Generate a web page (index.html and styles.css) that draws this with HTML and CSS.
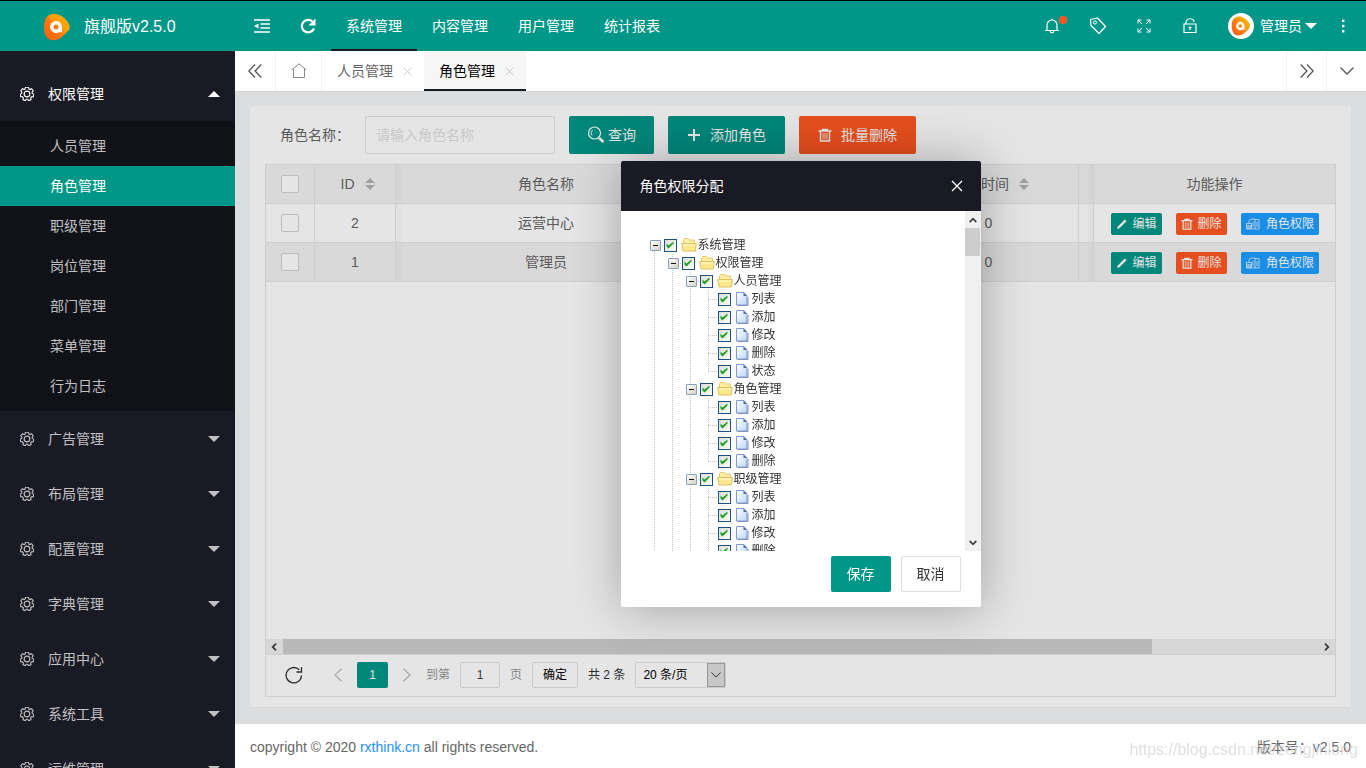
FILE: index.html
```html
<!DOCTYPE html>
<html lang="zh-CN">
<head>
<meta charset="utf-8">
<title>角色管理</title>
<link rel="stylesheet" href="styles.css">
</head>
<body>
<svg class="defs" aria-hidden="true">
  <defs>
    <linearGradient id="g-logo" x1="0" y1="1" x2="1" y2="0"><stop offset="0" stop-color="#ff5a10"/><stop offset=".5" stop-color="#ff7d0c"/><stop offset=".55" stop-color="#ff9a08"/><stop offset="1" stop-color="#ffb400"/></linearGradient>
    <linearGradient id="g-file" x1="0" y1="0" x2="1" y2="1"><stop offset="0" stop-color="#fff"/><stop offset="1" stop-color="#b9d6fb"/></linearGradient>
  </defs>
  <symbol id="i-logo" viewBox="0 0 26 28"><path d="M9 .8C14 0 20 4 23 8c4 5 3 8 0 11-4 4-7 8-14 8.200C3 27 0 22 0 14 0 6 3 1.500 9 .8z" fill="url(#g-logo)"/><path d="M12 8a6 6 0 1 0 3.500 10.900L18 19.500V14a6 6 0 0 0-6-6z" fill="#fff"/><circle cx="12" cy="14" r="2.500" fill="#ff7d0c"/></symbol>
  <symbol id="i-gear" viewBox="1.3 1.300 13.400 13.800"><g fill="none" stroke="currentColor" stroke-width="1.100"><path d="M6.500 1.600h3l.4 1.700 1 .5 1.600-.8 1.600 2-1.100 1.400.2 1.200 1.600.8-.6 2.500-1.800.1-.8 1 .4 1.700-2.300 1.100L8.600 13.400H7.400l-1.100 1.400L4 13.700l.4-1.700-.8-1-1.800-.1-.6-2.500 1.600-.8.200-1.200-1.100-1.400 1.600-2 1.600.8 1-.5z"/><circle cx="8" cy="8.200" r="2.800"/></g></symbol>
  <symbol id="i-fold" viewBox="0 0 16 16"><path d="M0 2h16M6.500 6h9.500M6.500 10h9.500M0 14h16" stroke="currentColor" stroke-width="1.700" fill="none"/><path d="M0 8 4.500 5.500v5z" fill="currentColor"/></symbol>
  <symbol id="i-reload" viewBox="0 0 16 16"><path d="M14 10.500A6.300 6.300 0 1 1 12.500 3.500" fill="none" stroke="currentColor" stroke-width="2.200"/><path d="M15.500.5v7H8.500z" fill="currentColor"/></symbol>
  <symbol id="i-bell" viewBox="0 0 16 16"><path d="M1 12.500h14M3 12.500V7a5 5 0 0 1 10 0v5.500M8 2V.8M6.300 13a1.700 1.900 0 0 0 3.400 0" fill="none" stroke="currentColor" stroke-width="1.200"/></symbol>
  <symbol id="i-tag" viewBox="0 0 18 18"><path d="M1.500 2.500 8.500 1l8 8.500-6.500 7-8-8z" fill="none" stroke="currentColor" stroke-width="1.200" stroke-linejoin="round"/><circle cx="6" cy="5.500" r="1.600" fill="none" stroke="currentColor"/></symbol>
  <symbol id="i-full" viewBox="0 0 14 14"><path d="M1 4.500V1h3.500M1 1l4 4M9.500 1H13v3.500M13 1 9 5M1 9.500V13h3.500M1 13l4-4M13 9.500V13H9.500M13 13 9 9" fill="none" stroke="currentColor"/></symbol>
  <symbol id="i-lock" viewBox="0 0 14 16"><path d="M1 6h12v8.500H1zM3 6V4.500a4 3.500 0 0 1 8-.5M7 8.500v3.500M5.500 9.500h3" fill="none" stroke="currentColor" stroke-width="1.200"/></symbol>
  <symbol id="i-dots" viewBox="0 0 4 14"><path d="M1 .5h2.400v2.400H1zM1 5.800h2.400v2.400H1zM1 11h2.400v2.400H1z" fill="currentColor"/></symbol>
  <symbol id="i-dleft" viewBox="0 0 14 14"><path d="M7 .5.8 7 7 13.500M13.300.5 7.100 7l6.200 6.500" fill="none" stroke="currentColor" stroke-width="1.300"/></symbol>
  <symbol id="i-dright" viewBox="0 0 14 14"><path d="M7 .5 13.200 7 7 13.500M.7.5 6.900 7 .7 13.500" fill="none" stroke="currentColor" stroke-width="1.300"/></symbol>
  <symbol id="i-down" viewBox="0 0 14 8"><path d="M.5.5 7 7 13.500.5" fill="none" stroke="currentColor" stroke-width="1.300"/></symbol>
  <symbol id="i-bold-down" viewBox="0 0 8 6"><path d="M.7 1 4 4.300 7.300 1" fill="none" stroke="currentColor" stroke-width="1.800"/></symbol>
  <symbol id="i-bold-left" viewBox="0 0 6 8"><path d="M5 .7 1.700 4 5 7.300" fill="none" stroke="currentColor" stroke-width="1.800"/></symbol>
  <symbol id="i-bold-right" viewBox="0 0 6 8"><path d="M1 .7 4.300 4 1 7.300" fill="none" stroke="currentColor" stroke-width="1.800"/></symbol>
  <symbol id="i-left" viewBox="0 0 8 14"><path d="M7.500.8 1 7l6.500 6.200" fill="none" stroke="currentColor" stroke-width="1.200"/></symbol>
  <symbol id="i-right" viewBox="0 0 8 14"><path d="M.5.8 7 7 .5 13.200" fill="none" stroke="currentColor" stroke-width="1.200"/></symbol>
  <symbol id="i-home" viewBox="0 0 16 16"><path d="M.5 7 8 .8 15.500 7M2.500 6v8.500h11V6" fill="none" stroke="currentColor"/></symbol>
  <symbol id="i-close" viewBox="0 0 12 12"><path d="m1 1 10 10M11 1 1 11" fill="none" stroke="currentColor" stroke-width="1.300"/></symbol>
  <symbol id="i-search" viewBox="0 0 18 18"><circle cx="7.500" cy="7" r="6" fill="none" stroke="currentColor" stroke-width="1.200"/><path d="M5.500 4A4 4 0 0 0 5 9.500" fill="none" stroke="currentColor"/><path d="m12 12 4.500 4" stroke="currentColor" stroke-width="2.600"/></symbol>
  <symbol id="i-plus" viewBox="0 0 14 14"><path d="M7 1v12M1 7h12" stroke="currentColor" stroke-width="2"/></symbol>
  <symbol id="i-trash" viewBox="0 0 14 14"><path d="M.5 3h13M4.500 3V1.500h5V3M2.500 3v10h9V3" fill="none" stroke="currentColor" stroke-width="1.400"/><path d="M5 5v6.500M7 5v6.500M9 5v6.500" stroke="currentColor" opacity=".8"/></symbol>
  <symbol id="i-pen" viewBox="0 0 12 12"><path d="m1 11 .8-2.600L8.800 1.500l1.700 1.700-7 7z" fill="currentColor"/></symbol>
  <symbol id="i-perm" viewBox="0 0 14 12"><path d="M.5 11V5.500h5V11zM3 5V2.500L5 1h4v10M9 1.500h4V11H6M7 4v5M11 4v5" fill="none" stroke="currentColor" opacity=".7"/><path d="M1 7h4v4H1z" fill="currentColor" opacity=".5"/></symbol>
  <symbol id="i-refresh" viewBox="0 0 18 18"><path d="M16.500 9.500a7.700 7.700 0 1 1-2.200-5.700M16.500 1v5h-5" fill="none" stroke="currentColor" stroke-width="1.300"/></symbol>
  <symbol id="i-folder" viewBox="0 0 16 14"><path d="M2.500 10V2l1-1.500h4l1 1.500h5v9z" fill="#fbeea0" stroke="#e6cb74"/><path d="M.7 5.500h14.600l-1 7.500H2z" fill="#fbe88a" stroke="#dfc063"/><path d="M2 7h12" stroke="#fffbd6"/></symbol>
  <symbol id="i-file" viewBox="0 0 16 14"><path d="M2.500 13.500h10.500V5" fill="none" stroke="#8d8ba6"/><path d="M1.500.5H9L12 4v9H1.500z" fill="url(#g-file)" stroke="#7f9ad6"/><path d="M8.500.5V4H12z" fill="#4a6cbb"/></symbol>
</svg>

<div class="app">
  <aside class="side">
    <a class="brand" href="#"><svg width="26" height="28"><use href="#i-logo"/></svg><span>旗舰版v2.5.0</span></a>
    <nav class="menu">
      <a class="menu-item open" href="#"><svg width="14" height="14"><use href="#i-gear"/></svg>权限管理<i class="caret up"></i></a>
      <div class="submenu">
        <a href="#">人员管理</a>
        <a class="current" href="#">角色管理</a>
        <a href="#">职级管理</a>
        <a href="#">岗位管理</a>
        <a href="#">部门管理</a>
        <a href="#">菜单管理</a>
        <a href="#">行为日志</a>
      </div>
      <a class="menu-item" href="#"><svg width="14" height="14"><use href="#i-gear"/></svg>广告管理<i class="caret"></i></a>
      <a class="menu-item" href="#"><svg width="14" height="14"><use href="#i-gear"/></svg>布局管理<i class="caret"></i></a>
      <a class="menu-item" href="#"><svg width="14" height="14"><use href="#i-gear"/></svg>配置管理<i class="caret"></i></a>
      <a class="menu-item" href="#"><svg width="14" height="14"><use href="#i-gear"/></svg>字典管理<i class="caret"></i></a>
      <a class="menu-item" href="#"><svg width="14" height="14"><use href="#i-gear"/></svg>应用中心<i class="caret"></i></a>
      <a class="menu-item" href="#"><svg width="14" height="14"><use href="#i-gear"/></svg>系统工具<i class="caret"></i></a>
      <a class="menu-item" href="#"><svg width="14" height="14"><use href="#i-gear"/></svg>运维管理<i class="caret"></i></a>
    </nav>
  </aside>

  <div class="page">
    <header class="top">
      <button class="top-btn" aria-label="收起菜单"><svg width="16" height="16"><use href="#i-fold"/></svg></button>
      <button class="top-btn" aria-label="刷新"><svg width="16" height="16"><use href="#i-reload"/></svg></button>
      <nav class="top-nav">
        <a class="on" href="#">系统管理</a>
        <a href="#">内容管理</a>
        <a href="#">用户管理</a>
        <a href="#">统计报表</a>
      </nav>
      <button class="top-btn bell" aria-label="消息"><svg width="16" height="16"><use href="#i-bell"/></svg><i class="dot"></i></button>
      <button class="top-btn" aria-label="便签"><svg width="18" height="18"><use href="#i-tag"/></svg></button>
      <button class="top-btn" aria-label="全屏"><svg width="14" height="14"><use href="#i-full"/></svg></button>
      <button class="top-btn" aria-label="锁屏"><svg width="14" height="16"><use href="#i-lock"/></svg></button>
      <a class="user" href="#"><span class="avatar"><svg width="20" height="20"><use href="#i-logo"/></svg></span>管理员<i class="caret"></i></a>
      <button class="top-btn" aria-label="更多"><svg width="4" height="14"><use href="#i-dots"/></svg></button>
    </header>

    <div class="tabs">
      <button class="tab-ctl first" aria-label="向左"><svg width="14" height="14"><use href="#i-dleft"/></svg></button>
      <button class="tab-ctl home" aria-label="首页"><svg width="16" height="16"><use href="#i-home"/></svg></button>
      <a class="tab" href="#">人员管理<svg width="9" height="9"><use href="#i-close"/></svg></a>
      <a class="tab on" href="#">角色管理<svg width="9" height="9"><use href="#i-close"/></svg></a>
      <button class="tab-ctl end" aria-label="向右"><svg width="14" height="14"><use href="#i-dright"/></svg></button>
      <button class="tab-ctl last" aria-label="更多标签"><svg width="14" height="8"><use href="#i-down"/></svg></button>
    </div>

    <main class="content">
      <section class="card">
        <form class="filters">
          <label for="role">角色名称：</label>
          <input id="role" type="text" placeholder="请输入角色名称">
          <button class="btn" type="button"><svg width="18" height="18"><use href="#i-search"/></svg>查询</button>
          <button class="btn wide" type="button"><svg width="14" height="14"><use href="#i-plus"/></svg>添加角色</button>
          <button class="btn wide danger" type="button"><svg width="14" height="14"><use href="#i-trash"/></svg>批量删除</button>
        </form>

        <div class="grid">
          <div class="grid-body">
            <table>
              <colgroup><col class="c-check"><col class="c-id"><col class="c-name"><col><col class="c-time"><col class="c-gap"><col class="c-ops"></colgroup>
              <thead>
                <tr><th><input type="checkbox" aria-label="全选"></th><th>ID<i class="sort"></i></th><th class="after-fixed">角色名称</th><th></th><th>添加时间<i class="sort"></i></th><th class="gap"></th><th>功能操作</th></tr>
              </thead>
              <tbody>
                <tr>
                  <td><input type="checkbox" aria-label="选择运营中心"></td><td>2</td><td class="after-fixed">运营中心</td><td></td><td>0</td><td class="gap"></td>
                  <td><div class="ops"><button class="mini"><svg width="12" height="12"><use href="#i-pen"/></svg>编辑</button><button class="mini danger"><svg width="12" height="12"><use href="#i-trash"/></svg>删除</button><button class="mini info"><svg width="14" height="12"><use href="#i-perm"/></svg>角色权限</button></div></td>
                </tr>
                <tr class="hover">
                  <td><input type="checkbox" aria-label="选择管理员"></td><td>1</td><td class="after-fixed">管理员</td><td></td><td>0</td><td class="gap"></td>
                  <td><div class="ops"><button class="mini"><svg width="12" height="12"><use href="#i-pen"/></svg>编辑</button><button class="mini danger"><svg width="12" height="12"><use href="#i-trash"/></svg>删除</button><button class="mini info"><svg width="14" height="12"><use href="#i-perm"/></svg>角色权限</button></div></td>
                </tr>
              </tbody>
            </table>
          </div>
          <div class="hbar"><svg width="6" height="8"><use href="#i-bold-left"/></svg><div class="htrack"><div class="hthumb"></div></div><svg width="6" height="8"><use href="#i-bold-right"/></svg></div>
          <div class="pager">
            <button class="plain refresh" aria-label="刷新表格"><svg width="18" height="18"><use href="#i-refresh"/></svg></button>
            <button class="plain arrow" aria-label="上一页"><svg width="8" height="14"><use href="#i-left"/></svg></button>
            <button class="num">1</button>
            <button class="plain arrow" aria-label="下一页"><svg width="8" height="14"><use href="#i-right"/></svg></button>
            <label for="goto">到第</label>
            <input id="goto" type="text" value="1">
            <span class="muted">页</span>
            <button class="ok">确定</button>
            <span class="total">共 2 条</span>
            <span class="size"><select aria-label="每页条数"><option>20 条/页</option></select><i><svg width="10" height="6"><use href="#i-down"/></svg></i></span>
          </div>
        </div>
      </section>
      <div class="shade"></div>
    </main>

    <footer class="foot">
      <p>copyright © 2020 <a href="#">rxthink.cn</a> all rights reserved.</p>
      <p>版本号：v2.5.0</p>
    </footer>
  </div>
</div>

<div class="layer">
  <div class="modal" role="dialog" aria-labelledby="modal-title">
    <div class="modal-head"><h2 id="modal-title">角色权限分配</h2><button class="plain" aria-label="关闭"><svg width="12" height="12"><use href="#i-close"/></svg></button></div>
    <div class="modal-body">
      <ul class="tree">
        <li><label><i class="sw minus"></i><input type="checkbox" checked><svg width="16" height="14"><use href="#i-folder"/></svg>系统管理</label>
          <ul>
            <li><label><i class="sw minus"></i><input type="checkbox" checked><svg width="16" height="14"><use href="#i-folder"/></svg>权限管理</label>
              <ul>
                <li><label><i class="sw minus"></i><input type="checkbox" checked><svg width="16" height="14"><use href="#i-folder"/></svg>人员管理</label>
                  <ul>
                    <li><label><i class="sw"></i><input type="checkbox" checked><svg width="16" height="14"><use href="#i-file"/></svg>列表</label></li>
                    <li><label><i class="sw"></i><input type="checkbox" checked><svg width="16" height="14"><use href="#i-file"/></svg>添加</label></li>
                    <li><label><i class="sw"></i><input type="checkbox" checked><svg width="16" height="14"><use href="#i-file"/></svg>修改</label></li>
                    <li><label><i class="sw"></i><input type="checkbox" checked><svg width="16" height="14"><use href="#i-file"/></svg>删除</label></li>
                    <li class="end"><label><i class="sw"></i><input type="checkbox" checked><svg width="16" height="14"><use href="#i-file"/></svg>状态</label></li>
                  </ul>
                </li>
                <li><label><i class="sw minus"></i><input type="checkbox" checked><svg width="16" height="14"><use href="#i-folder"/></svg>角色管理</label>
                  <ul>
                    <li><label><i class="sw"></i><input type="checkbox" checked><svg width="16" height="14"><use href="#i-file"/></svg>列表</label></li>
                    <li><label><i class="sw"></i><input type="checkbox" checked><svg width="16" height="14"><use href="#i-file"/></svg>添加</label></li>
                    <li><label><i class="sw"></i><input type="checkbox" checked><svg width="16" height="14"><use href="#i-file"/></svg>修改</label></li>
                    <li class="end"><label><i class="sw"></i><input type="checkbox" checked><svg width="16" height="14"><use href="#i-file"/></svg>删除</label></li>
                  </ul>
                </li>
                <li><label><i class="sw minus"></i><input type="checkbox" checked><svg width="16" height="14"><use href="#i-folder"/></svg>职级管理</label>
                  <ul>
                    <li><label><i class="sw"></i><input type="checkbox" checked><svg width="16" height="14"><use href="#i-file"/></svg>列表</label></li>
                    <li><label><i class="sw"></i><input type="checkbox" checked><svg width="16" height="14"><use href="#i-file"/></svg>添加</label></li>
                    <li><label><i class="sw"></i><input type="checkbox" checked><svg width="16" height="14"><use href="#i-file"/></svg>修改</label></li>
                    <li><label><i class="sw"></i><input type="checkbox" checked><svg width="16" height="14"><use href="#i-file"/></svg>删除</label></li>
                  </ul>
                </li>
              </ul>
            </li>
          </ul>
        </li>
      </ul>
      <div class="vbar"><svg width="8" height="6" class="flip"><use href="#i-bold-down"/></svg><div class="vthumb"></div><svg width="8" height="6"><use href="#i-bold-down"/></svg></div>
    </div>
    <div class="modal-foot"><button class="save">保存</button><button class="cancel">取消</button></div>
  </div>
</div>
<div class="watermark">https://blog.csdn.net/zengjinlong</div>
</body>
</html>
```
FILE: styles.css
```css
* { box-sizing: border-box; }
body, p, h2, ul { margin: 0; padding: 0; }
body {
  font: 14px/20px "Liberation Sans", "Noto Sans CJK SC", sans-serif;
  color: #666;
  overflow: hidden;
}
a { color: inherit; text-decoration: none; }
button, input, select { font: inherit; }
button { border: 0; padding: 0; background: none; color: inherit; display: flex; align-items: center; justify-content: center; }
svg { display: block; flex: none; }
.defs { position: absolute; width: 0; height: 0; }
.caret { border: 6px solid transparent; border-top-color: currentColor; border-bottom-width: 0; }
.caret.up { border-width: 0 6px 6px; border-bottom-color: currentColor; }

.app { display: flex; height: 100vh; border-top: 1px solid #000; background: #fff; }

/* Sidebar */
.side { width: 235px; flex: none; background: #1a1a24; color: #c0c0c2; overflow: hidden; }
.brand { display: flex; align-items: center; gap: 14px; height: 50px; padding: 2px 0 0 44px; background: #009688; color: #fff; font-size: 16px; }
.menu { padding-top: 15px; }
.menu-item { display: flex; align-items: center; height: 55px; padding: 0 15px 0 20px; gap: 14px; }
.menu-item .caret { margin-left: auto; }
.menu-item.open { color: #fff; }
.submenu { background: #111217; padding: 5px 0; }
.submenu a { display: block; padding-left: 50px; line-height: 40px; }
.submenu .current { background: #009688; color: #fff; }

/* Header */
.page { flex: 1; min-width: 0; display: flex; flex-direction: column; }
.top { display: flex; height: 50px; flex: none; padding-left: 4px; background: #009688; color: #fff; }
.top-btn { width: 46px; }
.top-nav { display: flex; margin-right: auto; }
.top-nav a { padding: 0 15px; line-height: 50px; }
.top-nav .on { box-shadow: inset 0 -2px #1a1a24; }
.bell { position: relative; }
.dot { position: absolute; top: 15px; right: 8px; width: 8px; height: 8px; border-radius: 50%; background: #ff5722; }
.user { display: flex; align-items: center; padding-left: 15px; width: 107px; }
.avatar { display: flex; align-items: center; justify-content: center; width: 26px; height: 26px; margin-right: 6px; border-radius: 50%; background: #fff; }
.user .caret { margin-left: 3px; }

/* Tabs */
.tabs { display: flex; height: 41px; flex: none; background: #fff; border-bottom: 1px solid #d0d1d3; }
.tab-ctl { width: 40px; border-left: 1px solid #f2f2f2; color: #555; }
.tab-ctl.first { border-left: 0; }
.tab-ctl.home { width: 47px; border-right: 1px solid #f2f2f2; color: #888; }
.end { margin-left: auto; }
.tab { display: flex; align-items: center; gap: 10px; padding: 0 12px 0 15px; width: 102px; }
.tab svg { color: #c4c4c4; }
.tab.on { background: #f6f6f6; color: #000; box-shadow: inset 0 -2px #1a1a24; }

/* Content */
.content { position: relative; flex: 1; min-height: 0; padding: 14px 15px 17px; background: #f5f7f9; display: flex; }
.card { flex: 1; min-width: 0; display: flex; flex-direction: column; padding: 10px 15px; background: #fff; border-radius: 2px; box-shadow: 0 1px 2px rgba(0,0,0,.05); }
.shade { position: absolute; inset: 0; background: rgba(0,0,0,.1); }
.filters { display: flex; align-items: center; height: 38px; }
.filters label { width: 100px; padding-left: 15px; }
.filters input { width: 190px; height: 38px; padding: 0 10px; border: 1px solid #e6e6e6; border-radius: 2px; background: #fff; }
.filters input::placeholder { color: #e0e0e0; }
.btn { height: 38px; width: 85px; margin-left: 14px; gap: 3px; background: #009688; color: #fff; border-radius: 2px; }
.btn.wide { width: 117px; gap: 9px; }
.danger, .mini.danger, .btn.danger { background: #ff5722; }

/* Table */
.grid { flex: 1; min-height: 0; display: flex; flex-direction: column; margin-top: 10px; border: 1px solid #e6e6e6; }
.grid-body { flex: 1; min-height: 0; overflow: hidden; }
table { width: 100%; table-layout: fixed; border-collapse: separate; border-spacing: 0; }
.c-check { width: 49px; }
.c-id { width: 81px; }
.c-name { width: 301px; }
.c-time { width: 180px; }
.c-gap { width: 15px; }
.c-ops { width: 241px; }
th, td { height: 39px; padding: 0; font-weight: 400; text-align: center; border: solid #e6e6e6; border-width: 0 1px 1px 0; }
th:last-child, td:last-child { border-right: 0; }
thead, .hover { background: #f2f2f2; }
.after-fixed { background: linear-gradient(to right, rgba(0,0,0,.03), transparent 7px); }
.gap { background: linear-gradient(to left, rgba(0,0,0,.03), transparent 7px); }
td input, th input { appearance: none; display: block; width: 18px; height: 18px; margin: 0 auto; border: 1px solid #d2d2d2; border-radius: 2px; background: #fff; }
.sort { display: inline-flex; flex-direction: column; gap: 2px; margin: 0 -5px 2px 10px; vertical-align: middle; }
.sort::before, .sort::after { content: ""; border: 5px solid transparent; }
.sort::before { border-top-width: 0; border-bottom-color: #b2b2b2; }
.sort::after { border-bottom-width: 0; border-top-color: #b2b2b2; }
.ops { display: flex; gap: 14px; padding: 2px 0 0 17px; }
.mini { width: 51px; height: 22px; gap: 4px; background: #009688; color: #fff; font-size: 12px; border-radius: 2px; }
.mini.info { width: 78px; background: #1e9fff; gap: 6px; }

.hbar { display: flex; align-items: center; height: 15px; padding: 0 5px; gap: 6px; background: #f0f0f0; color: #444; }
.htrack { flex: 1; height: 15px; }
.hthumb { width: 84%; height: 15px; background: #cdcdcd; }
.pager { display: flex; align-items: center; height: 42px; padding: 0 0 2px 19px; border-top: 1px solid #e6e6e6; font-size: 12px; color: #333; }
.refresh { margin-right: 16px; }
.arrow { width: 38px; color: #bbb; }
.num { width: 31px; height: 26px; background: #009688; color: #fff; border-radius: 2px; }
.pager label, .muted { color: #999; }
.pager input { width: 40px; height: 26px; margin: 0 10px; text-align: center; border: 1px solid #e2e2e2; border-radius: 2px; color: #444; background: #fff; }
.ok { width: 46px; height: 26px; margin: 0 10px; border: 1px solid #e2e2e2; border-radius: 2px; color: #000; }
.size { display: flex; width: 91px; height: 26px; margin-left: 10px; border: 1px solid #e2e2e2; border-radius: 2px; }
.size select { appearance: none; flex: 1; min-width: 0; border: 0; padding: 0 7px; background: #fff; color: #000; }
.size i { width: 18px; display: flex; align-items: center; justify-content: center; background: #dedede; border: 1px solid #aaa; }

.foot { display: flex; justify-content: space-between; align-items: center; height: 44px; flex: none; padding: 2px 15px 0; }
.foot a { color: #1e90ff; }

/* Dialog */
.layer { position: fixed; inset: 0 0 0 235px; display: flex; align-items: center; justify-content: center; }
.modal { width: 360px; background: #fff; border-radius: 2px; box-shadow: 1px 1px 50px rgba(0,0,0,.3); color: #333; overflow: hidden; }
.modal-head { display: flex; align-items: center; justify-content: space-between; height: 50px; padding: 0 18px 0 19px; background: #1a1a24; color: #fff; }
.modal-head h2 { font-size: 14px; font-weight: 400; }
.modal-body { display: flex; height: 340px; }
.tree { flex: 1; padding: 25px 0 0 25px; font-size: 12px; overflow: hidden; }
ul { list-style: none; }
.tree ul { padding-left: 18px; }
.tree li { background: repeating-linear-gradient(to bottom, #c4c4c4 0 1px, transparent 1px 2px) 8px 0 / 1px 100% no-repeat; }
.tree > li { background-position: 8px 9px; }
.tree .end { background-size: 1px 9px; }
.tree label { display: flex; align-items: center; height: 18px; line-height: 18px; }
.tree label svg { margin: 0 1px 0 4px; }
.sw { width: 18px; height: 18px; display: flex; align-items: center; background: repeating-linear-gradient(to right, #c4c4c4 0 1px, transparent 1px 2px) 8px 9px / 9px 1px no-repeat; }
.minus::before { content: ""; width: 9px; height: 9px; margin-left: 4px; border: 1px solid #8aa0b8; border-radius: 1px; background: linear-gradient(#111, #111) center / 5px 1px no-repeat, linear-gradient(135deg, #fff, #d5d0c5); }
.tree input { appearance: none; width: 13px; height: 13px; margin: 0; border: 1px solid #1c5180; background: linear-gradient(135deg, #dcdcd7, #fff); }
.tree input:checked::before { content: ""; display: block; width: 11px; height: 11px; background: #21a121; clip-path: polygon(2px 4px, 4px 6px, 9px 2px, 9px 4px, 4px 9px, 2px 7px); }
.vbar { width: 16px; flex: none; display: flex; flex-direction: column; align-items: center; padding: 6px 0 5px; background: #f0f0f0; color: #444; }
.vbar svg:last-child { margin-top: auto; }
.flip { transform: rotate(180deg); }
.vthumb { width: 15px; height: 28px; margin-top: 5px; background: #cdcdcd; }
.modal-foot { display: flex; justify-content: flex-end; gap: 10px; padding: 5px 20px 15px; }
.modal-foot button { width: 60px; height: 36px; border-radius: 2px; }
.save { background: #009688; color: #fff; }
.modal-foot .cancel { border: 1px solid #dedede; color: #333; }

.watermark { position: fixed; right: 8px; bottom: 8px; font-size: 16px; color: rgba(215,215,215,.8); }
```
